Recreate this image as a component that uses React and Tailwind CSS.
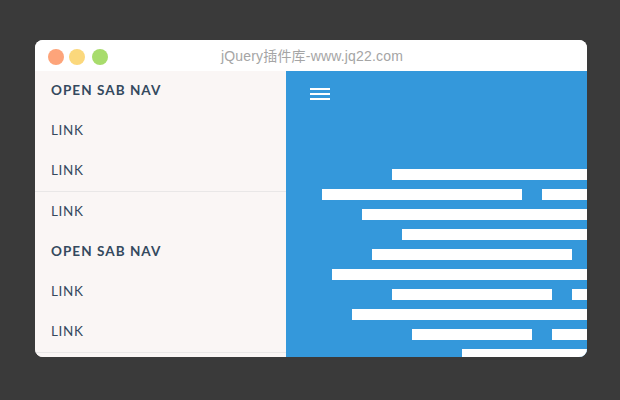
const dots = ['bg-[#fda47a]', 'bg-[#fbd87c]', 'bg-[#a8dc6c] ml-[2px]'];

// each row: left offset, then bar widths (20px gap between them)
const rows = [
  { offset: 'ml-[106px]', bars: ['w-[195px]'] },
  { offset: 'ml-[36px]', bars: ['w-[200px]', 'w-[45px]'] },
  { offset: 'ml-[76px]', bars: ['w-[225px]'] },
  { offset: 'ml-[116px]', bars: ['w-[185px]'] },
  { offset: 'ml-[86px]', bars: ['w-[200px]'] },
  { offset: 'ml-[46px]', bars: ['w-[255px]'] },
  { offset: 'ml-[106px]', bars: ['w-[160px]', 'w-[15px]'] },
  { offset: 'ml-[66px]', bars: ['w-[235px]'] },
  { offset: 'ml-[126px]', bars: ['w-[120px]', 'w-[35px]'] },
  { offset: 'ml-[176px]', bars: ['w-[125px]'] },
];

const navItems = [
  { label: 'OPEN SAB NAV', bold: true },
  { label: 'LINK' },
  { label: 'LINK', divider: true },
  { label: 'LINK' },
  { label: 'OPEN SAB NAV', bold: true },
  { label: 'LINK' },
  { label: 'LINK', divider: true },
];

function NavRow({ label, bold, divider }) {
  return (
    <div className={`flex items-center pl-4 pb-0.5 shrink-0 text-[13.5px] text-[#34495e] ${divider ? 'h-[41px] border-b border-[#e9e7e7]' : 'h-10'} ${bold ? 'font-bold tracking-[1.05px]' : 'tracking-[0.65px]'}`}>
      {label}
    </div>
  );
}

export default function App() {
  return (
    <div className="w-[620px] h-[400px] bg-[#3a3a3a] pt-10 pl-[35px] font-['Lato','Liberation_Sans',sans-serif]">
      <div className="w-[552px] h-[317px] rounded-lg overflow-hidden flex flex-col bg-white">
        {/* Title bar */}
        <div className="relative h-[31px] shrink-0 flex items-center justify-center bg-white">
          <div className="absolute left-[13px] top-[9px] flex gap-[5px]">
            {dots.map((c) => (
              <span key={c} className={`w-4 h-4 rounded-full ${c}`} />
            ))}
          </div>
          <span className="pt-0.5 pl-0.5 text-[14px] tracking-[0.18px] text-[#a5a5a5] font-['Liberation_Sans','Noto_Sans_CJK_SC',sans-serif]">jQuery插件库-www.jq22.com</span>
        </div>

        <div className="flex flex-1 min-h-0">
          {/* Sidebar */}
          <div className="w-[251px] shrink-0 flex flex-col overflow-hidden bg-[#faf6f5]">
            {navItems.map((item, i) => (
              <NavRow key={i} {...item} />
            ))}
          </div>

          {/* Main */}
          <div className="flex-1 flex flex-col overflow-hidden bg-[#3498db]">
            <div className="ml-6 mt-[17px] w-5 flex flex-col gap-[3px] shrink-0">
              <span className="h-0.5 bg-white" />
              <span className="h-0.5 bg-white" />
              <span className="h-0.5 bg-white" />
            </div>
            <div className="mt-[69px] flex flex-col gap-[9px]">
              {rows.map((row, i) => (
                <div key={i} className={`flex gap-5 h-[11px] shrink-0 ${row.offset}`}>
                  {row.bars.map((w, j) => (
                    <span key={j} className={`h-full bg-white ${w}`} />
                  ))}
                </div>
              ))}
            </div>
          </div>
        </div>
      </div>
    </div>
  );
}
